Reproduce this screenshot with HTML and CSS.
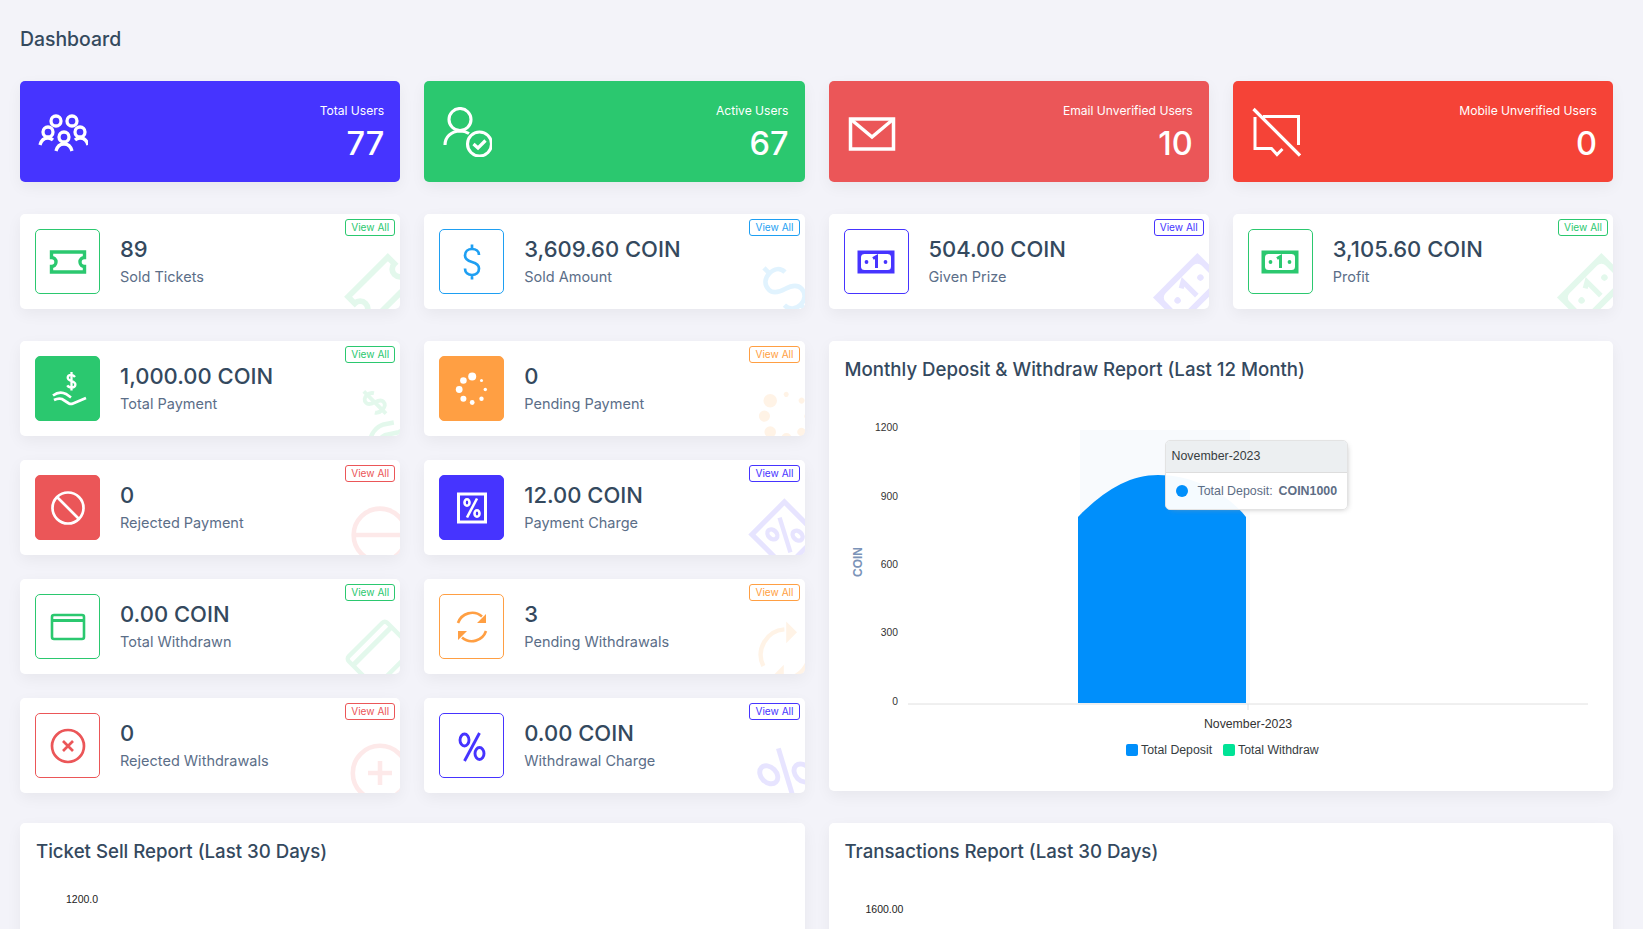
FILE: index.html
```html
<!DOCTYPE html>
<html lang="en">
<head>
  <meta charset="UTF-8">
  <meta name="viewport" content="width=device-width, initial-scale=1.0">
  <title>Dashboard</title>
  <link rel="stylesheet" href="styles.css">
</head>
<body>
  <!-- shared icon shapes, used by the icon boxes and the faded corner marks -->
  <svg class="icon-defs" xmlns="http://www.w3.org/2000/svg">
    <symbol id="i-ticket" viewBox="0 0 40 40"><path d="M3.5 10H36.500V15.500a4.500 4.500 0 0 0 0 9V30H3.500V24.500a4.500 4.500 0 0 0 0-9Z" fill="none" stroke="currentColor" stroke-width="3.400"/></symbol>
    <symbol id="i-dollar" viewBox="0 0 40 40"><path d="M27 13c0-4-3-6-7-6s-7 2.500-7 6.500c0 4 3.500 5.500 7 6.500s7 2.500 7 6.500-3 6.500-7 6.500-7-2.500-7-6.500M20 2.500V7M20 33V37.500" fill="none" stroke="currentColor" stroke-width="2.700"/></symbol>
    <symbol id="i-bill" viewBox="0 0 40 40"><rect x="1.500" y="8.500" width="37" height="23" fill="currentColor"/><rect x="5" y="12" width="30" height="16" rx="3.500" fill="#fff"/><circle cx="10.500" cy="20" r="1.900" fill="currentColor"/><circle cx="29.500" cy="20" r="1.900" fill="currentColor"/><path d="M17 16.500 20.500 14.500V26" fill="none" stroke="currentColor" stroke-width="3"/></symbol>
    <symbol id="i-hand" viewBox="0 0 40 40"><path d="M27 8c-1-1.500-2.300-2.200-3.800-2.200-2 0-3.500 1-3.500 3s2 2.700 3.800 3.300 3.900 1.300 3.900 3.300-1.600 3-3.800 3c-2 0-3.500-.6-4.300-2M23.500 3V21.500" fill="none" stroke="currentColor" stroke-width="2.300"/><path d="M5 26.500c4-3 9-3.500 13-1.500l5 3.500M6 31c3-1.500 5-2 8-1l7 4.500c1.500.8 2.500.6 4 0L38 29" fill="none" stroke="currentColor" stroke-width="2.700"/></symbol>
    <symbol id="i-spinner" viewBox="0 0 40 40"><g fill="currentColor"><circle cx="20.200" cy="7.500" r="4"/><circle cx="11.400" cy="11.500" r="3.300"/><circle cx="7.200" cy="20.500" r="3.400"/><circle cx="11.400" cy="29.800" r="3"/><circle cx="20.200" cy="33.500" r="2.400"/><circle cx="29.500" cy="29.800" r="2.200"/><circle cx="33.300" cy="20.500" r="1.700"/><circle cx="29.500" cy="11.500" r="1.500"/></g></symbol>
    <symbol id="i-ban" viewBox="0 0 40 40"><circle cx="20" cy="20" r="15.500" fill="none" stroke="currentColor" stroke-width="2.700"/><path d="M9 9 31 31" fill="none" stroke="currentColor" stroke-width="2.700"/></symbol>
    <symbol id="i-percent-box" viewBox="0 0 40 40"><rect x="6.500" y="6" width="27" height="28" fill="none" stroke="currentColor" stroke-width="3"/><g fill="none" stroke="currentColor" stroke-width="2.600"><ellipse cx="15" cy="14.500" rx="2.500" ry="3.300"/><ellipse cx="25" cy="25.500" rx="2.500" ry="3.300"/><path d="M25 10.500 15 29.500"/></g></symbol>
    <symbol id="i-card" viewBox="0 0 40 40"><rect x="4" y="8" width="32" height="24" rx="2" fill="none" stroke="currentColor" stroke-width="2.600"/><path d="M4 13.500H36" stroke="currentColor" stroke-width="3"/></symbol>
    <symbol id="i-sync" viewBox="0 0 40 40"><g fill="none" stroke="currentColor" stroke-width="2.600"><path d="M6 16A15 15 0 0 1 30 9.500"/><path d="M34 24A15 15 0 0 1 10 30.500"/></g><path d="M34 7V16H25Z M6 33V24H15Z" fill="currentColor"/></symbol>
    <symbol id="i-times" viewBox="0 0 40 40"><circle cx="20" cy="20" r="16" fill="none" stroke="currentColor" stroke-width="2.700"/><path d="M15 15 25 25M25 15 15 25" fill="none" stroke="currentColor" stroke-width="2.700"/></symbol>
    <symbol id="i-percent" viewBox="0 0 40 40"><g fill="none" stroke="currentColor" stroke-width="2.900"><ellipse cx="12.500" cy="14" rx="4.500" ry="6"/><ellipse cx="27.500" cy="27.500" rx="4.500" ry="6"/><path d="M27.500 7 12.500 35"/></g></symbol>
  </svg>

  <main class="page">
    <h1 class="page-title">Dashboard</h1>

    <section class="row-four row-top">
      <div class="top-card bg-blue">
        <svg class="top-icon" viewBox="0 0 50 50"><g fill="none" stroke="#fff" stroke-width="3.300"><circle cx="18" cy="14" r="5"/><circle cx="34" cy="14" r="5"/><circle cx="10" cy="25" r="5"/><circle cx="42" cy="25" r="5"/><circle cx="26" cy="30" r="5"/><path d="M2 38c1-4 4-7 8-7 2 0 3.500.7 5 2M37 33c1.500-1.300 3-2 5-2 4 0 7 3 8 7M18 44c1-4 4-7 8-7s7 3 8 7"/></g></svg>
        <div class="top-text">
          <span class="top-label">Total Users</span>
          <span class="top-num">77</span>
        </div>
      </div>
      <div class="top-card bg-green">
        <svg class="top-icon" viewBox="0 0 50 50"><g fill="none" stroke="#fff" stroke-width="3.100"><circle cx="18" cy="12.500" r="11"/><path d="M3 38C3 30 9 24.500 18 24c3.500 0 6.500 1 9 2.500"/><circle cx="37.500" cy="37" r="12"/><path d="M31.500 37l4.500 4 7.500-7.500" stroke-width="3.200"/></g></svg>
        <div class="top-text">
          <span class="top-label">Active Users</span>
          <span class="top-num">67</span>
        </div>
      </div>
      <div class="top-card bg-salmon">
        <svg class="top-icon" viewBox="0 0 50 50"><g fill="none" stroke="#fff" stroke-width="3.500"><rect x="3.500" y="12" width="43" height="30"/><path d="M3.500 12 25 30 46.500 12"/></g></svg>
        <div class="top-text">
          <span class="top-label">Email Unverified Users</span>
          <span class="top-num">10</span>
        </div>
      </div>
      <div class="top-card bg-red">
        <svg class="top-icon" viewBox="0 0 50 50"><g fill="none" stroke="#fff" stroke-width="3"><path d="M12 9.500H47.500V38M4 10V41.500H20.500L26 47.500 31.500 42"/><path d="M2.500 2 49 48.500" stroke-width="3.200"/></g></svg>
        <div class="top-text">
          <span class="top-label">Mobile Unverified Users</span>
          <span class="top-num">0</span>
        </div>
      </div>
    </section>

    <section class="row-four row-stats">
      <div class="stat-card c-green">
        <a class="view-all">View All</a>
        <div class="stat-icon"><svg><use href="#i-ticket"/></svg></div>
        <div class="stat-text"><h3>89</h3><p>Sold Tickets</p></div>
        <svg class="stat-mark"><use href="#i-ticket"/></svg>
      </div>
      <div class="stat-card c-info">
        <a class="view-all">View All</a>
        <div class="stat-icon"><svg><use href="#i-dollar"/></svg></div>
        <div class="stat-text"><h3>3,609.60 COIN</h3><p>Sold Amount</p></div>
        <svg class="stat-mark"><use href="#i-dollar"/></svg>
      </div>
      <div class="stat-card c-blue">
        <a class="view-all">View All</a>
        <div class="stat-icon"><svg><use href="#i-bill"/></svg></div>
        <div class="stat-text"><h3>504.00 COIN</h3><p>Given Prize</p></div>
        <svg class="stat-mark"><use href="#i-bill"/></svg>
      </div>
      <div class="stat-card c-green">
        <a class="view-all">View All</a>
        <div class="stat-icon"><svg><use href="#i-bill"/></svg></div>
        <div class="stat-text"><h3>3,105.60 COIN</h3><p>Profit</p></div>
        <svg class="stat-mark"><use href="#i-bill"/></svg>
      </div>
    </section>

    <section class="row-two row-middle">
      <div class="stat-grid">
        <div class="stat-card c-green">
          <a class="view-all">View All</a>
          <div class="stat-icon solid"><svg><use href="#i-hand"/></svg></div>
          <div class="stat-text"><h3>1,000.00 COIN</h3><p>Total Payment</p></div>
          <svg class="stat-mark"><use href="#i-hand"/></svg>
        </div>
        <div class="stat-card c-orange">
          <a class="view-all">View All</a>
          <div class="stat-icon solid"><svg><use href="#i-spinner"/></svg></div>
          <div class="stat-text"><h3>0</h3><p>Pending Payment</p></div>
          <svg class="stat-mark"><use href="#i-spinner"/></svg>
        </div>
        <div class="stat-card c-red">
          <a class="view-all">View All</a>
          <div class="stat-icon solid"><svg><use href="#i-ban"/></svg></div>
          <div class="stat-text"><h3>0</h3><p>Rejected Payment</p></div>
          <svg class="stat-mark"><use href="#i-ban"/></svg>
        </div>
        <div class="stat-card c-blue">
          <a class="view-all">View All</a>
          <div class="stat-icon solid"><svg><use href="#i-percent-box"/></svg></div>
          <div class="stat-text"><h3>12.00 COIN</h3><p>Payment Charge</p></div>
          <svg class="stat-mark"><use href="#i-percent-box"/></svg>
        </div>
        <div class="stat-card c-green">
          <a class="view-all">View All</a>
          <div class="stat-icon"><svg><use href="#i-card"/></svg></div>
          <div class="stat-text"><h3>0.00 COIN</h3><p>Total Withdrawn</p></div>
          <svg class="stat-mark"><use href="#i-card"/></svg>
        </div>
        <div class="stat-card c-orange">
          <a class="view-all">View All</a>
          <div class="stat-icon"><svg><use href="#i-sync"/></svg></div>
          <div class="stat-text"><h3>3</h3><p>Pending Withdrawals</p></div>
          <svg class="stat-mark"><use href="#i-sync"/></svg>
        </div>
        <div class="stat-card c-red">
          <a class="view-all">View All</a>
          <div class="stat-icon"><svg><use href="#i-times"/></svg></div>
          <div class="stat-text"><h3>0</h3><p>Rejected Withdrawals</p></div>
          <svg class="stat-mark"><use href="#i-times"/></svg>
        </div>
        <div class="stat-card c-blue">
          <a class="view-all">View All</a>
          <div class="stat-icon"><svg><use href="#i-percent"/></svg></div>
          <div class="stat-text"><h3>0.00 COIN</h3><p>Withdrawal Charge</p></div>
          <svg class="stat-mark"><use href="#i-percent"/></svg>
        </div>
      </div>

      <div class="panel panel-chart">
        <h2 class="panel-title">Monthly Deposit &amp; Withdraw Report (Last 12 Month)</h2>
        <div class="chart">
          <!-- viewBox uses page coordinates of the chart area -->
          <svg class="chart-svg" viewBox="829 401 784 390">
            <rect x="1080" y="430" width="170" height="274" fill="#f8fafd"/>
            <path d="M1078 703V517C1104 490 1130 475 1158 475C1190 475 1224 490 1246 517V703Z" fill="#008ffb"/>
            <path d="M908 704H1588" stroke="#e0e0e0" stroke-width="1"/>
            <path d="M1248 704V710" stroke="#e0e0e0" stroke-width="1"/>
            <g class="chart-axis" text-anchor="end">
              <text x="898" y="431">1200</text>
              <text x="898" y="500">900</text>
              <text x="898" y="568">600</text>
              <text x="898" y="636">300</text>
              <text x="898" y="705">0</text>
            </g>
            <text class="chart-axis-title" transform="translate(862 562) rotate(-90)" text-anchor="middle">COIN</text>
            <text class="chart-xlabel" x="1248" y="728" text-anchor="middle">November-2023</text>
            <rect x="1126" y="744" width="12" height="12" rx="2" fill="#008ffb"/>
            <text class="chart-legend" x="1141" y="754">Total Deposit</text>
            <rect x="1223" y="744" width="12" height="12" rx="2" fill="#00e396"/>
            <text class="chart-legend" x="1238" y="754">Total Withdraw</text>
          </svg>
          <div class="chart-tooltip">
            <div class="tooltip-title">November-2023</div>
            <div class="tooltip-row">
              <span class="tooltip-dot"></span>
              <span>Total Deposit:</span>
              <b>COIN1000</b>
            </div>
          </div>
        </div>
      </div>
    </section>

    <section class="row-two">
      <div class="panel panel-low">
        <h2 class="panel-title">Ticket Sell Report (Last 30 Days)</h2>
        <span class="tick tick-ticket">1200.0</span>
      </div>
      <div class="panel panel-low">
        <h2 class="panel-title">Transactions Report (Last 30 Days)</h2>
        <span class="tick tick-trx">1600.00</span>
      </div>
    </section>
  </main>
</body>
</html>
```

FILE: styles.css
```css
html, body {
  height: 100%;
  overflow: hidden;
}

body {
  margin: 0;
  background-color: #f3f3f9;
  font-family: Inter, "Open Sans", sans-serif;
  color: #34495e;
}

.icon-defs {
  display: none;
}

.page {
  padding: 0 30px 0 20px;
}

.page-title {
  margin: 0;
  padding: 26px 0 28px;
  font-size: 19.400px;
  line-height: 27px;
  font-weight: 500;
  color: #34495e;
}

.row-four {
  display: grid;
  grid-template-columns: repeat(4, 1fr);
  gap: 24px;
}

.row-two {
  display: grid;
  grid-template-columns: repeat(2, 1fr);
  gap: 24px;
  align-items: start;
}

.row-top,
.row-stats {
  margin-bottom: 32px;
}

.row-middle {
  margin-bottom: 30px;
}

.stat-grid {
  display: grid;
  grid-template-columns: repeat(2, 1fr);
  gap: 24px;
}

/* colored cards on top */
.top-card {
  height: 101px;
  padding: 0 16px 0 18px;
  box-sizing: border-box;
  display: flex;
  align-items: center;
  justify-content: space-between;
  border-radius: 5px;
  box-shadow: 0 5px 15px rgba(0, 0, 0, 0.05);
  color: #fff;
}

.bg-blue { background-color: #4634ff; }
.bg-green { background-color: #2bc86f; }
.bg-salmon { background-color: #eb5658; }
.bg-red { background-color: #f54337; }

.top-icon {
  width: 50px;
  height: 50px;
  flex: none;
}

.top-text {
  display: flex;
  flex-direction: column;
  align-items: flex-end;
  gap: 4px;
  padding-top: 3px;
}

.top-label {
  font-size: 12.100px;
  line-height: 18px;
}

.top-num {
  font-size: 32.500px;
  line-height: 40px;
  font-weight: 500;
}

/* white stat cards */
.stat-card {
  position: relative;
  height: 95px;
  padding: 15px;
  box-sizing: border-box;
  display: flex;
  align-items: center;
  gap: 20px;
  overflow: hidden;
  background-color: #fff;
  border-radius: 5px;
  box-shadow: 0 5px 15px rgba(0, 0, 0, 0.05);
}

.c-green { color: #2bc86f; }
.c-info { color: #1e9ff2; }
.c-blue { color: #4634ff; }
.c-orange { color: #ff9f43; }
.c-red { color: #eb5658; }

.view-all {
  position: absolute;
  top: 5px;
  right: 5px;
  z-index: 1;
  padding: 0 5px;
  border: 1px solid currentColor;
  border-radius: 3px;
  font-size: 10.100px;
  line-height: 15px;
}

.stat-icon {
  width: 65px;
  height: 65px;
  flex: none;
  box-sizing: border-box;
  display: flex;
  align-items: center;
  justify-content: center;
  border: 1px solid currentColor;
  border-radius: 5px;
}

.stat-icon svg {
  width: 40px;
  height: 40px;
}

.stat-icon.solid {
  position: relative;
  background-color: currentColor;
}

.stat-icon.solid svg {
  color: #fff;
}

.stat-text {
  padding-bottom: 2px;
}

.stat-text h3 {
  margin: 0 0 2px;
  font-size: 22px;
  line-height: 30px;
  font-weight: 500;
  color: #34495e;
}

.stat-text p {
  margin: 0;
  font-size: 14.500px;
  line-height: 21px;
  color: #5b6e88;
}

.stat-mark {
  position: absolute;
  right: -14px;
  bottom: -14px;
  width: 68px;
  height: 68px;
  transform: rotate(-45deg);
  opacity: 0.13;
}

/* report panels */
.panel {
  background-color: #fff;
  border-radius: 5px;
  box-shadow: 0 5px 15px rgba(0, 0, 0, 0.05);
}

.panel-chart {
  height: 450px;
}

.panel-low {
  position: relative;
  height: 400px;
}

.panel-title {
  margin: 0;
  height: 60px;
  padding: 16px;
  box-sizing: border-box;
  font-size: 18.650px;
  line-height: 25px;
  font-weight: 500;
  color: #34495e;
}

.tick {
  position: absolute;
  font-family: "Liberation Sans", sans-serif;
  font-size: 10.500px;
  color: #222;
}

.tick-ticket {
  top: 70px;
  left: 46px;
}

.tick-trx {
  top: 80px;
  left: 37px;
}

.chart {
  position: relative;
  height: 390px;
}

.chart-svg {
  display: block;
  width: 784px;
  height: 390px;
}

.chart-axis text,
.chart-xlabel,
.chart-legend {
  font-family: "Liberation Sans", sans-serif;
  fill: #333;
}

.chart-axis text {
  font-size: 10.300px;
}

.chart-xlabel,
.chart-legend {
  font-size: 12.300px;
}

.chart-legend {
  fill: #373d3f;
}

.chart-axis-title {
  font-family: "Liberation Sans", sans-serif;
  font-size: 12px;
  font-weight: 700;
  fill: #7b93b8;
}

.chart-tooltip {
  position: absolute;
  left: 336px;
  top: 39px;
  width: 183px;
  box-sizing: border-box;
  border: 1px solid #e3e3e3;
  border-radius: 5px;
  overflow: hidden;
  background-color: rgba(255, 255, 255, 0.96);
  box-shadow: 2px 2px 6px -4px #999;
  font-family: "Liberation Sans", sans-serif;
  font-size: 12.400px;
  color: #373d3f;
}

.tooltip-title {
  height: 31px;
  padding-left: 6px;
  line-height: 30px;
  background-color: #eceff1;
  border-bottom: 1px solid #ddd;
}

.tooltip-row {
  height: 36px;
  padding-left: 10px;
  display: flex;
  align-items: center;
  color: #5d6d85;
}

.tooltip-dot {
  width: 12px;
  height: 12px;
  margin-right: 10px;
  border-radius: 50%;
  background-color: #008ffb;
}

.tooltip-row b {
  margin-left: 6px;
}
```
